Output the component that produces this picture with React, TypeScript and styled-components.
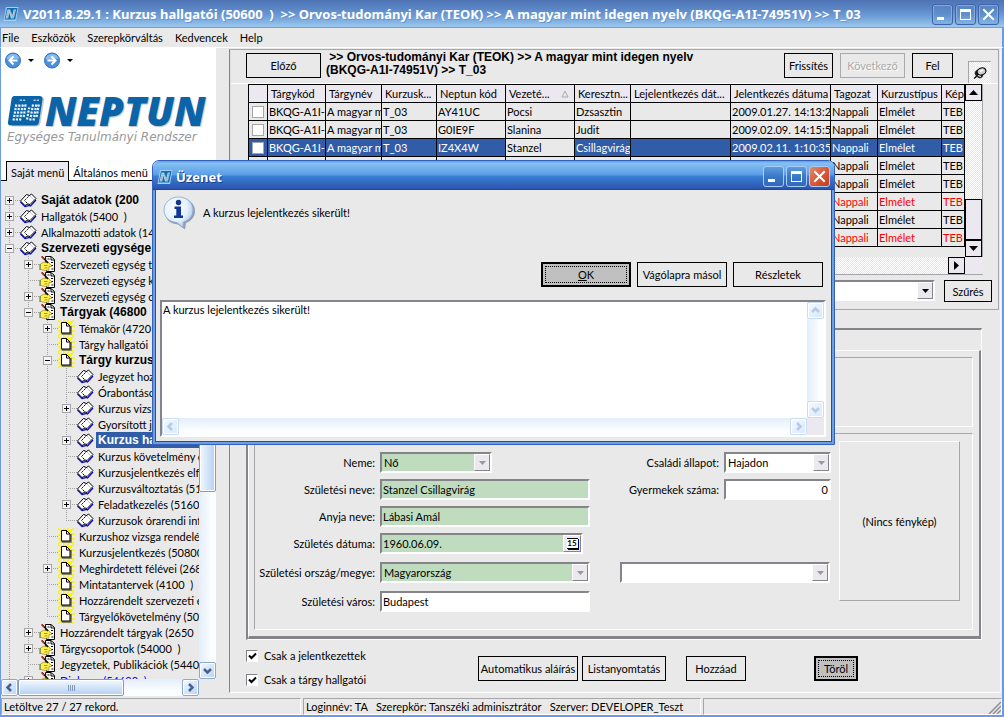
import React from "react";
import styled, { createGlobalStyle, css } from "styled-components";

const FACE = "#e9e9e9";
const SHADE = "#a6a6aa";
const DARK = "#84848a";
const SELECT = "#315da8";

const GlobalStyle = createGlobalStyle`
  *, *::before, *::after { box-sizing: border-box; }
  html, body, #root { height: 100%; }
  body {
    margin: 0;
    background: ${FACE};
    color: #000;
    font-family: Lato, Roboto, "Liberation Sans", Arial, sans-serif;
    font-size: 11px;
    line-height: 13px;
    overflow: hidden;
  }
  button, input, select, textarea { font: inherit; color: inherit; margin: 0; border-radius: 0; }
`;

/* ---------- window frame ---------- */

const Window = styled.div`
  position: relative;
  display: flex;
  flex-direction: column;
  height: 100vh;
  min-height: 700px;
  overflow: hidden;
`;

const TitleBar = styled.header`
  display: flex;
  align-items: center;
  gap: 4px;
  height: 28px;
  padding: 0 5px 0 3px;
  flex: none;
  color: #fff;
  background: linear-gradient(#4e73b3 0, #5a85c4 30%, #6f9fd9 60%, #9cc8ee 96%, #6c9fdf 97%);
`;

const TitleText = styled.h1<{ $shadow?: string }>`
  flex: 1;
  min-width: 0;
  margin: 0;
  overflow: hidden;
  font-family: "Noto Sans", "Open Sans", sans-serif;
  font-size: 13px;
  line-height: 20px;
  font-weight: 700;
  white-space: pre;
  text-shadow: 1px 1px 0 ${(p) => p.$shadow || "#6a94cf"};
`;

const CaptionButtons = styled.div`
  display: flex;
  gap: 2px;
`;

const CaptionButton = styled.button<{ $tone: "idle" | "live" | "close" }>`
  display: flex;
  width: 21px;
  height: 21px;
  padding: 0;
  border: 1px solid ${(p) => (p.$tone === "idle" ? "#3f64ac" : "#a9cdf3")};
  border-radius: 3px;
  background: ${(p) =>
    p.$tone === "close"
      ? "linear-gradient(135deg, #e08a70, #dc5433 55%, #c2401f)"
      : p.$tone === "live"
      ? "linear-gradient(#5e9ce0, #3a78c8 50%, #3468bb)"
      : "linear-gradient(#5b82bd, #5e8fce 50%, #86b4e4)"};
  box-shadow: inset 0 0 0 1px ${(p) => (p.$tone === "idle" ? "#86abd8" : "transparent")};
  svg { margin: auto; }
`;

const MenuBar = styled.nav`
  display: flex;
  gap: 12px;
  height: 20px;
  padding: 2px 0 0 1px;
  flex: none;
  border-left: 1px solid #6a9be4;
  border-right: 2px solid #6a9be4;
  border-bottom: 1px solid #fff;
`;

const MenuItem = styled.a`
  color: #000;
  text-decoration: none;
  line-height: 15px;
`;

const Workspace = styled.div`
  display: flex;
  flex: 1;
  min-height: 0;
  border-left: 1px solid #6a9be4;
  border-right: 2px solid #6a9be4;
`;

const StatusBar = styled.footer`
  display: flex;
  gap: 2px;
  height: 21px;
  padding: 2px 0 0 0;
  flex: none;
  border: solid #6a9be4;
  border-width: 0 2px 2px 1px;
`;

const StatusCell = styled.div<{ $width?: number }>`
  display: flex;
  align-items: center;
  flex: ${(p) => (p.$width ? `0 0 ${p.$width}px` : "1")};
  padding-left: 2px;
  white-space: pre;
  overflow: hidden;
  border: 1px solid #fff;
  border-top-color: ${SHADE};
  border-left-color: ${SHADE};
`;

const SizeGrip = styled.svg`
  margin-left: auto;
  align-self: flex-end;
`;

/* ---------- left pane ---------- */

const SidePane = styled.aside`
  display: flex;
  flex-direction: column;
  flex: 0 0 215px;
  min-width: 0;
`;

const Brand = styled.div`
  height: 113px;
  flex: none;
  padding: 4px 0 0 4px;
  background: #fff;
`;

const NavTools = styled.div`
  display: flex;
  align-items: center;
  height: 16px;
  gap: 6px;
`;

const IconButton = styled.button`
  display: flex;
  padding: 0;
  border: 0;
  background: none;
`;

const NavArrow = styled.span`
  margin-right: 4px;
  border: solid transparent;
  border-width: 3px 3px 0;
  border-top-color: #000;
`;

const LogoRow = styled.div`
  display: flex;
  align-items: center;
  height: 32px;
  margin-top: 27px;
  padding-left: 2px;
`;

const LogoWord = styled.span`
  font-family: "Open Sans", sans-serif;
  font-size: 40px;
  line-height: 32px;
  font-weight: 800;
  font-style: italic;
  color: #0c64a8;
  text-shadow: 1px 1px 1px #b8c4d0;
`;

const LogoLine = styled.div`
  margin-top: 2px;
  padding-left: 2px;
  font-family: "DejaVu Sans", sans-serif;
  font-size: 12px;
  line-height: 16px;
  font-style: italic;
  color: #999;
  white-space: nowrap;
`;

const TabStrip = styled.div`
  display: flex;
  height: 20px;
  flex: none;
  background: linear-gradient(#fff 19px, #000 19px);
  padding-left: 5px;
`;

const SideTab = styled.button<{ $active?: boolean }>`
  padding: 2px 4px 0;
  background: none;
  border: 0;
  white-space: nowrap;
  ${(p) =>
    p.$active &&
    css`
      background: #ebe8ef;
      border: solid #000;
      border-width: 1px 1px 0;
    `}
`;

const TreeArea = styled.div`
  display: flex;
  flex: 1;
  min-height: 0;
`;

const Tree = styled.ul`
  flex: 1;
  min-width: 0;
  margin: 0;
  padding: 11px 0 0;
  list-style: none;
  overflow: hidden;
`;

const TreeRow = styled.li`
  display: flex;
  height: 16px;
`;

const dotsDown = "repeating-linear-gradient(#a0a0a0 0 1px, transparent 1px 2px)";
const dotsAcross = "repeating-linear-gradient(90deg, #a0a0a0 0 1px, transparent 1px 2px)";

const Guide = styled.span<{ $line: "full" | "branch" | "first" | "last" }>`
  display: flex;
  align-items: center;
  flex: 0 0 19px;
  height: 16px;
  padding-left: 4px;
  background-repeat: no-repeat;
  background-image: ${dotsDown}${(p) => (p.$line === "full" ? "" : `, ${dotsAcross}`)};
  background-size: 1px ${(p) => (p.$line === "last" || p.$line === "first" ? "8px" : "16px")}, 11px 1px;
  background-position: 8px ${(p) => (p.$line === "first" ? "8px" : "0")}, 8px 8px;
`;

const Expander = styled.button`
  display: flex;
  width: 9px;
  height: 9px;
  padding: 0;
  border: 1px solid ${SHADE};
  background: #f4f4f4;
`;

const NodeIcon = styled.span`
  display: flex;
  flex: 0 0 19px;
`;

const NodeLabel = styled.a<{ $bold?: boolean; $active?: boolean; $link?: boolean }>`
  flex: 1;
  padding: 1px 0 0 2px;
  overflow: hidden;
  font-weight: ${(p) => (p.$bold ? 700 : 400)};
  font-size: ${(p) => (p.$bold ? 12 : 11)}px;
  ${(p) => p.$bold && css`font-family: "Liberation Sans", Arial, sans-serif;`}
  line-height: 15px;
  text-decoration: none;
  white-space: pre;
  color: ${(p) => (p.$active ? "#fff" : p.$link ? "#00f" : "#000")};
  background: ${(p) => (p.$active ? SELECT : "transparent")};
`;

const ScrollColumn = styled.div`
  display: flex;
  flex-direction: column;
  flex: 0 0 17px;
  background: linear-gradient(90deg, #e3eefc, #fbfdff 70%);
`;

const ScrollRow = styled.div`
  display: flex;
  flex: none;
  height: 17px;
  margin-right: 17px;
  background: linear-gradient(#e3eefc, #fbfdff 70%);
`;

const XpScrollButton = styled.button<{ $faded?: boolean }>`
  display: flex;
  flex: none;
  width: 17px;
  height: 17px;
  padding: 0;
  border: 1px solid ${(p) => (p.$faded ? "#c8dcf6" : "#8ba9cf")};
  border-radius: 2px;
  background: linear-gradient(135deg, #f4f9ff, ${(p) => (p.$faded ? "#d8e8fc" : "#b9d3f3")});
  box-shadow: inset 0 0 0 1px #fff;
  svg { margin: auto; }
`;

const XpThumb = styled.div<{ $size: number; $vertical?: boolean }>`
  display: flex;
  align-items: center;
  justify-content: center;
  gap: 1px;
  flex: 0 0 ${(p) => p.$size}px;
  border: 1px solid #7f9cc4;
  border-radius: 2px;
  box-shadow: inset 0 0 0 1px #fff;
  background: ${(p) =>
    p.$vertical
      ? "linear-gradient(90deg, #f2f8ff, #b4d0f2)"
      : "linear-gradient(#f2f8ff, #b4d0f2)"};
`;

const GripLine = styled.i`
  width: 1px;
  height: 6px;
  background: #8099bd;
`;

const Spring = styled.div`
  flex: 1;
`;

/* ---------- right pane ---------- */

const MainPane = styled.main`
  display: flex;
  flex-direction: column;
  flex: 1;
  min-width: 0;
  margin: 1px 1px 3px 13px;
  border-left: 1px solid ${DARK};
  border-right: 1px solid #f8f8f8;
  border-bottom: 1px solid #fff;
`;

const TopPanel = styled.section`
  flex: none;
  margin-right: 1px;
  border: 1px solid ${SHADE};
  border-left: 1px solid #ddd;
`;

const Header = styled.div`
  display: flex;
  align-items: flex-start;
  height: 34px;
  padding: 3px 7px 0 15px;
  border-bottom: 1px solid #fff;
`;

const Path = styled.p`
  flex: 1;
  margin: -2px 0 0;
  padding-left: 5px;
  font-family: "Liberation Sans", Arial, sans-serif;
  font-size: 12px;
  font-weight: 700;
  line-height: 13px;
  white-space: nowrap;
`;

const FlatButton = styled.button<{ $width: number; $short?: boolean; $focus?: boolean; $gap?: number }>`
  flex: none;
  width: ${(p) => p.$width}px;
  height: ${(p) => (p.$short ? 22 : 25)}px;
  margin-left: ${(p) => p.$gap || 0}px;
  padding: 0;
  border: 1px solid #000;
  background: ${FACE};
  white-space: nowrap;
  &:disabled {
    color: #aaa;
    border-color: #aaa;
    text-shadow: 1px 1px 0 #fff;
  }
  ${(p) =>
    p.$focus &&
    css`
      border-width: 2px;
      background: #c0c0c0;
      outline: 1px dotted #000;
      outline-offset: -5px;
    `}
`;

const PinBox = styled.button`
  display: flex;
  width: 23px;
  height: 22px;
  margin: 8px 0 0 15px;
  padding: 0;
  border: solid ${SHADE};
  border-width: 1px 0 0 1px;
  background: repeating-conic-gradient(#fff 0 25%, #e6e6e6 0 50%) 0 0 / 2px 2px;
  svg { margin: auto; }
`;

const GridFrame = styled.div`
  display: flex;
  height: 173px;
  margin: 0 15px 0 17px;
`;

const TableWrap = styled.div`
  flex: 1;
  min-width: 0;
  overflow: hidden;
`;

const DataTable = styled.table`
  width: 100%;
  table-layout: fixed;
  border-collapse: separate;
  border-spacing: 0;
  border: solid #000;
  border-width: 1px 0 0 1px;
`;

const HeadCell = styled.th`
  height: 18px;
  padding: 0 0 0 3px;
  overflow: hidden;
  border: solid #000;
  border-width: 0 1px 1px 0;
  background: #ebe8ef;
  font-weight: 400;
  text-align: left;
  white-space: nowrap;
`;

const SortMark = styled.svg`
  float: right;
  margin: 3px 5px 0 0;
`;

const Cell = styled.td<{ $tone: "plain" | "active" | "red" }>`
  height: 18px;
  padding: 0 0 0 1px;
  overflow: hidden;
  border: solid #000;
  border-width: 0 1px 1px 0;
  white-space: pre;
  color: ${(p) => (p.$tone === "red" ? "#f00" : p.$tone === "active" ? "#fff" : "#000")};
  background: ${(p) => (p.$tone === "active" ? SELECT : "transparent")};
`;

const RowCheck = styled.input`
  display: block;
  appearance: none;
  width: 12px;
  height: 12px;
  margin: 0 0 0 2px;
  border: 1px solid ${SHADE};
  background: #fff;
`;

const FlatScroll = styled.div`
  display: flex;
  flex-direction: column;
  flex: 0 0 18px;
  border-right: 1px solid ${SHADE};
  background: repeating-conic-gradient(#fff 0 25%, #e6e6e6 0 50%) 0 0 / 2px 2px;
`;

const FlatScrollButton = styled.button`
  display: flex;
  flex: none;
  width: 17px;
  height: 17px;
  padding: 0;
  border: 1px solid #000;
  background: #ebe8ef;
  svg { margin: auto; }
`;

const FlatThumb = styled.div`
  height: 41px;
  border: 1px solid #000;
  background: #ebe8ef;
`;

const FlatScrollRow = styled.div`
  display: flex;
  justify-content: flex-end;
  height: 18px;
  margin: 0 15px 0 17px;
  padding-right: 18px;
  border-bottom: 1px solid ${SHADE};
  background:
    linear-gradient(90deg, transparent calc(100% - 18px), #ebe8ef 0),
    repeating-conic-gradient(#fff 0 25%, #e6e6e6 0 50%) 0 0 / 2px 2px;
`;

const FilterRow = styled.div`
  display: flex;
  justify-content: flex-end;
  gap: 9px;
  height: 34px;
  padding: 5px 6px 0 0;
`;

const sunken = css`
  border: 2px solid #fff;
  border-top-color: ${DARK};
  border-left-color: ${DARK};
`;

const Combo = styled.div<{ $width?: number; $green?: boolean }>`
  display: flex;
  height: 21px;
  width: ${(p) => (p.$width ? `${p.$width}px` : "100%")};
  ${sunken}
  background: ${(p) => (p.$green ? "#bfdcbf" : "#fff")};
`;

const ComboSelect = styled.select`
  appearance: none;
  flex: 1;
  min-width: 0;
  padding: 0 2px;
  border: 0;
  background: transparent;
`;

const ComboArrow = styled.span<{ $muted?: boolean }>`
  display: flex;
  flex: 0 0 16px;
  border: 1px solid #fff;
  border-right-color: ${DARK};
  border-bottom-color: ${DARK};
  background: #ebe8ef;
  color: ${(p) => (p.$muted ? "#999" : "#000")};
  svg { margin: auto; }
`;

const TextField = styled.input<{ $green?: boolean; $right?: boolean }>`
  width: 100%;
  height: 21px;
  padding: 0 1px;
  ${sunken}
  background: ${(p) => (p.$green ? "#bfdcbf" : "#fff")};
  text-align: ${(p) => (p.$right ? "right" : "left")};
`;

const DateField = styled.div`
  display: flex;
  width: 203px;
  height: 21px;
  ${sunken}
  background: #bfdcbf;
`;

const DateInput = styled.input`
  flex: 1;
  min-width: 0;
  padding: 0 1px;
  border: 0;
  background: transparent;
`;

const DateButton = styled.button`
  display: flex;
  align-items: center;
  justify-content: center;
  width: 18px;
  padding: 0;
  border: 1px solid #fff;
  border-right-color: ${DARK};
  border-bottom-color: ${DARK};
  background: #ebe8ef;
`;

const DateGlyph = styled.span`
  width: 11px;
  height: 11px;
  border: solid #000;
  border-width: 1px 0;
  box-shadow: 1px 1px 0 #00007c;
  background: #fff;
  font-size: 8px;
  line-height: 9px;
  font-weight: 700;
`;

const TabPanel = styled.section`
  display: flex;
  flex-direction: column;
  flex: 1;
  min-height: 0;
  margin: 18px 18px 0 16px;
  border: 1px solid #fff;
  border-top: 2px solid ${DARK};
  border-left: 2px solid ${DARK};
`;

const TabPage = styled.div`
  display: flex;
  flex-direction: column;
  flex: 1;
  margin-top: 20px;
  padding: 6px 6px 6px 5px;
  border: 1px solid #fff;
  border-right: 2px solid ${DARK};
  border-bottom: 3px solid ${DARK};
`;

const Group = styled.fieldset<{ $grow?: boolean }>`
  display: flex;
  min-width: 0;
  margin: 0 0 ${(p) => (p.$grow ? 0 : 6)}px;
  padding: ${(p) => (p.$grow ? "7px 12px 0 0" : "0")};
  flex: ${(p) => (p.$grow ? "1" : "0 0 70px")};
  border: 1px solid #fff;
  border-top-color: ${SHADE};
  border-left-color: ${SHADE};
`;

const FormGrid = styled.div<{ $label: number; $field: number; $gap?: number }>`
  display: grid;
  grid-template-columns: ${(p) => p.$label}px ${(p) => p.$field}px;
  grid-template-rows: 27px 27px 27px 29px 29px 20px;
  column-gap: 5px;
  align-items: start;
  align-content: start;
  padding-top: 11px;
  margin-left: ${(p) => p.$gap || 0}px;
`;

const FieldLabel = styled.label<{ $row: number }>`
  grid-row: ${(p) => p.$row};
  grid-column: 1;
  line-height: 22px;
  text-align: right;
  white-space: nowrap;
`;

const FieldSlot = styled.div<{ $row: number; $span?: boolean }>`
  grid-row: ${(p) => p.$row};
  grid-column: ${(p) => (p.$span ? "1 / 3" : "2")};
`;

const Photo = styled.div`
  display: flex;
  align-items: center;
  justify-content: center;
  width: 121px;
  height: 160px;
  margin-left: auto;
  border: 1px solid ${SHADE};
  border-top-color: #fff;
  border-left-color: #fff;
`;

const Actions = styled.div`
  display: flex;
  align-items: flex-start;
  flex: none;
  height: 52px;
  padding: 9px 0 0 16px;
`;

const CheckStack = styled.div`
  display: flex;
  flex-direction: column;
  gap: 11px;
  width: 232px;
`;

const CheckLabel = styled.label`
  display: flex;
  align-items: center;
  gap: 6px;
  height: 13px;
`;

const CheckHolder = styled.span`
  display: grid;
  width: 12px;
  height: 12px;
  > * { grid-area: 1 / 1; }
  svg { margin: 2px; pointer-events: none; }
`;

const CheckInput = styled.input`
  appearance: none;
  width: 12px;
  height: 12px;
  border: 1px solid #fff;
  border-top-color: ${DARK};
  border-left-color: ${DARK};
  background: #fff;
`;

const ActionButtons = styled.div`
  display: flex;
  padding-top: 7px;
`;

/* ---------- message dialog ---------- */

const Dialog = styled.div`
  position: absolute;
  left: 152px;
  top: 160px;
  width: 683px;
  border: 1px solid #3561bc;
  border-radius: 7px 7px 0 0;
  background: ${FACE};
  overflow: hidden;
`;

const DialogTitleBar = styled.div`
  display: flex;
  align-items: center;
  gap: 3px;
  height: 29px;
  padding: 2px 4px 0 4px;
  color: #fff;
  background: linear-gradient(#5d9fe6 0, #85c0f2 8%, #5b9ce8 48%, #3a80d6 52%, #2c54af 96%, #274392 97%);
`;

const DialogBody = styled.div`
  display: flex;
  flex-direction: column;
  height: 254px;
  padding: 6px 6px 5px 5px;
  border: solid #6d9fdf;
  border-width: 0 2px 2px 2px;
  box-shadow: inset 1px -1px 0 #274fa5, inset -1px 0 0 #274fa5;
`;

const Message = styled.div`
  display: flex;
  align-items: flex-start;
  gap: 8px;
  height: 66px;
  padding-left: 3px;
  p { margin: 10px 0 0; }
`;

const DialogButtons = styled.div`
  display: flex;
  justify-content: flex-end;
  gap: 6px;
  padding-right: 3px;
`;

const LogBox = styled.div`
  display: flex;
  flex-direction: column;
  flex: 1;
  min-height: 0;
  margin-top: 13px;
  ${sunken}
  background: #ebe8ef;
`;

const LogTop = styled.div`
  display: flex;
  flex: 1;
  min-height: 0;
`;

const LogText = styled.textarea`
  flex: 1;
  min-width: 0;
  padding: 1px 0 0 1px;
  border: 0;
  resize: none;
  overflow: hidden;
  background: #fff;
`;

/* ---------- glyphs ---------- */

const AppIcon = () => (
  <svg width="16" height="16" viewBox="0 0 16 16" aria-hidden="true">
    <path d="M3 1h12.5L13 15H.5z" fill="#9fd2f2" />
    <path d="M4 2h10.5L12.2 13.6H1.6z" fill="#0d6fb5" />
    <path d="M2.500 12.500 4.500 3.600h2.500L9.400 9l1.300-5.400h2.300L10.800 12.500H8L6.300 6.800 5.200 12.500z" fill="#b9cbd8" />
    <path d="M4 12 5.500 4M7 5l3 7M10 12l2-8" stroke="#5f9cc8" strokeWidth=".8" strokeDasharray="1 1" fill="none" />
  </svg>
);

const MinGlyph = () => (
  <svg width="13" height="13" aria-hidden="true"><path d="M1 9h7v3H1z" fill="#fff" /></svg>
);
const MaxGlyph = () => (
  <svg width="13" height="13" aria-hidden="true"><path d="M1 1h11v11H1zM2 4v7h9V4z" fill="#fff" fillRule="evenodd" /></svg>
);
const CloseGlyph = () => (
  <svg width="13" height="13" aria-hidden="true"><path d="M2 2l9 9M11 2l-9 9" stroke="#fff" strokeWidth="2" strokeLinecap="square" /></svg>
);

const Caption = ({ live }: { live?: boolean }) => (
  <CaptionButtons>
    <CaptionButton $tone={live ? "live" : "idle"} aria-label="Kis méret"><MinGlyph /></CaptionButton>
    <CaptionButton $tone={live ? "live" : "idle"} aria-label="Teljes méret"><MaxGlyph /></CaptionButton>
    <CaptionButton $tone={live ? "close" : "idle"} aria-label="Bezárás"><CloseGlyph /></CaptionButton>
  </CaptionButtons>
);

const RoundArrow = ({ right }: { right?: boolean }) => (
  <svg width="17" height="17" viewBox="0 0 17 17" aria-hidden="true">
    <circle cx="8" cy="8.500" r="7.500" fill="#4a90dc" stroke="#2c6cc0" />
    <path d="M1.500 7a6.700 6.700 0 0 1 13 0C11 5 5 9 1.500 7z" fill="#86bdf0" />
    <path
      d={right ? "M3.500 8.500h7.500M7.500 4.500l4 4-4 4" : "M12.500 8.500H5M8.500 4.500l-4 4 4 4"}
      stroke="#fff" strokeWidth="2" fill="none"
    />
  </svg>
);

const LogoMark = () => (
  <svg width="38" height="32" viewBox="0 0 38 32" aria-hidden="true">
    <path d="M8.500 2H34q3.500 0 3 3.500L33.500 28q-.5 3.500-4 3.500H5z" fill="#c3c9d0" />
    <path d="M7.500 1H32.500q3.500 0 3 3.500L32 27q-.5 3.500-4 3.500H4q-3.500 0-3-3.500L4.500 4q.500-3 3-3z" fill="#0c64a8" />
    <g fill="none" stroke="#e6f2fb" strokeWidth="2.200" strokeDasharray="2.200 1.300">
      <path d="M6.500 25.500 9.500 8.500M9.700 25.500l3-17M13 25.500l3-17" />
      <path d="M16.700 22l2-13.500M20 24.500l2.200-12" />
      <path d="M23.200 25.500l3-17M26.500 25.500l3-17M29.600 22l2.400-13.500" />
    </g>
    <path d="M12.800 5.200h2.200M16 5.200h2.200M26.500 5.200h2.200M29.700 5.200h2.200" stroke="#a8cbe6" strokeWidth="1.600" />
  </svg>
);

const BookIcon = () => (
  <svg width="17" height="16" viewBox="0 0 17 16" aria-hidden="true">
    <path d="M.5 10 5 14.500 9.500 13.500 10.500 14 16 8" stroke="#0000e0" strokeWidth="1.200" fill="none" />
    <path d="M.5 9 6.500 2.500l3 1 2-1.500 4.500 4.500-6 6-2-.5-3 1.500z" fill="#fff" stroke="#000" />
    <path d="M9.500 3.500 4.500 8.500l3.500 3.500" stroke="#000" strokeDasharray="1.500 .8" fill="none" />
    <path d="M10 4l4 4" stroke="#bbb" strokeWidth=".8" />
  </svg>
);

const HandIcon = () => (
  <svg width="17" height="16" viewBox="0 0 17 16" aria-hidden="true">
    <path d="M6.500.5H12L15.500 3.500v12h-8z" fill="#fff" stroke="#000" />
    <path d="M12 1v3h3" fill="none" stroke="#000" />
    <path d="M8.500 3h2M12 6.500h2M12 9.500h2M12.500 13h2" stroke="#000" />
    <path d="M1 8v6" stroke="#00c8c8" strokeWidth="1.500" />
    <path d="M1.500 8 5 6l2 .5 2-1 1 2 2.500 1.500v1.500H10v3.500L6.500 14.500 1.500 13.500z" fill="#fff04a" stroke="#6a5800" strokeWidth=".5" />
    <path d="M5 9.500h3.500M5.500 12h3" stroke="#6a5800" strokeWidth=".6" />
    <path d="M3 .5 9 7" stroke="#000" strokeWidth="1.200" />
    <path d="M2.500.500 5 3.200" stroke="#e02020" strokeWidth="1.500" />
  </svg>
);

const PageIcon = () => (
  <svg width="17" height="16" viewBox="0 0 17 16" aria-hidden="true">
    <path d="M0 0l4 4M16 0l-4 4M0 16l4-4M16 16l-4-4M6 0v3M10 0v3M6 13v3M11 13v3M0 7h4M12 6h5M0 11h4M13 11h4" stroke="#fff200" strokeWidth="1.300" />
    <path d="M2.500 1.500h11v13h-11z" fill="#fff200" />
    <path d="M4.500 4v10h8.500V6" stroke="#666" strokeWidth="1.500" fill="none" />
    <path d="M3.500 2.500h5l3.500 3.500v7H3.500z" fill="#fff" stroke="#000" />
    <path d="M8.500 2.500V6H12" fill="none" stroke="#000" />
  </svg>
);

const icons = { book: BookIcon, hand: HandIcon, page: PageIcon };

const paths = {
  up: "M2 7l3.500-3.500L9 7",
  down: "M2 4l3.500 3.500L9 4",
  left: "M7 2 3.500 5.500 7 9",
  right: "M4 2l3.500 3.500L4 9",
};

const Chevron = ({ to, faded }: { to: keyof typeof paths; faded?: boolean }) => (
  <svg width="11" height="11" aria-hidden="true">
    <path d={paths[to]} fill="none" stroke={faded ? "#b3cbe8" : "#44618f"} strokeWidth="2.500" />
  </svg>
);

const Triangle = ({ d }: { d: string }) => (
  <svg width="9" height="9" aria-hidden="true"><path d={d} fill="currentColor" /></svg>
);

const PinIcon = () => (
  <svg width="14" height="14" viewBox="0 0 14 14" aria-hidden="true">
    <path d="M1 12.500 5 9" stroke="#000" strokeWidth="1.200" />
    <ellipse cx="6" cy="8" rx="4.500" ry="3.500" transform="rotate(40 6 8)" fill="#222" />
    <ellipse cx="8.500" cy="5.500" rx="4.500" ry="3.500" transform="rotate(-20 8.500 5.500)" fill="#d0d0d0" stroke="#000" strokeWidth="1.200" />
    <path d="M5 9.500l3 1" stroke="#eee" strokeWidth="1.200" />
    <path d="M7 5.500l3-1.500" stroke="#fff" strokeWidth="1.500" />
  </svg>
);

const InfoIcon = () => (
  <svg width="32" height="34" viewBox="0 0 32 34" aria-hidden="true">
    <defs>
      <radialGradient id="bubble" cx=".4" cy=".35" r=".7">
        <stop offset="0" stopColor="#fff" />
        <stop offset=".6" stopColor="#e4f0fc" />
        <stop offset="1" stopColor="#9cbfe8" />
      </radialGradient>
    </defs>
    <path d="M17 2c9 0 15 6 15 13 0 6-4 10-9 12l-1 6.500-7-5C7 28 2 23 2 16z" fill="#6d7c94" opacity=".7" />
    <path d="M15.500 1C24 1 30 6.500 30 14c0 6-4 10.500-9.500 12l-.5 6-6-5.500C6 26 1 21 1 14 1 6.500 7.500 1 15.500 1z" fill="url(#bubble)" stroke="#84a8d6" strokeWidth=".8" />
    <circle cx="15.500" cy="6.500" r="2.700" fill="#12379a" />
    <path d="M11.500 10.500h6.500v9h2v2.500h-9v-2.500h2.300V13h-1.800z" fill="#12379a" />
  </svg>
);

/* ---------- data ---------- */

type Node = {
  level: number;
  icon: keyof typeof icons;
  text: string;
  sign?: "+" | "-";
  bold?: boolean;
  active?: boolean;
  link?: boolean;
  last?: boolean;
};

const nodes: Node[] = [
  { level: 0, icon: "book", text: "Saját adatok (200", sign: "+", bold: true },
  { level: 0, icon: "book", text: "Hallgatók (5400  )", sign: "+" },
  { level: 0, icon: "book", text: "Alkalmazotti adatok (14", sign: "+" },
  { level: 0, icon: "book", text: "Szervezeti egysége", sign: "-", bold: true },
  { level: 1, icon: "hand", text: "Szervezeti egység t", sign: "+" },
  { level: 1, icon: "hand", text: "Szervezeti egység k" },
  { level: 1, icon: "hand", text: "Szervezeti egység o", sign: "+" },
  { level: 1, icon: "hand", text: "Tárgyak (46800", sign: "-", bold: true },
  { level: 2, icon: "page", text: "Témakör (4720", sign: "+" },
  { level: 2, icon: "page", text: "Tárgy hallgatói" },
  { level: 2, icon: "page", text: "Tárgy kurzus", sign: "-", bold: true },
  { level: 3, icon: "book", text: "Jegyzet hoz" },
  { level: 3, icon: "book", text: "Órabontáso" },
  { level: 3, icon: "book", text: "Kurzus vizs", sign: "+" },
  { level: 3, icon: "book", text: "Gyorsított je" },
  { level: 3, icon: "book", text: "Kurzus ha", sign: "+", bold: true, active: true },
  { level: 3, icon: "book", text: "Kurzus követelmény e" },
  { level: 3, icon: "book", text: "Kurzusjelentkezés elfo" },
  { level: 3, icon: "book", text: "Kurzusváltoztatás (51" },
  { level: 3, icon: "book", text: "Feladatkezelés (5160", sign: "+" },
  { level: 3, icon: "book", text: "Kurzusok órarendi info", last: true },
  { level: 2, icon: "page", text: "Kurzushoz vizsga rendelé" },
  { level: 2, icon: "page", text: "Kurzusjelentkezés (50800" },
  { level: 2, icon: "page", text: "Meghirdetett félévei (2684", sign: "+" },
  { level: 2, icon: "page", text: "Mintatantervek (4100  )" },
  { level: 2, icon: "page", text: "Hozzárendelt szervezeti e" },
  { level: 2, icon: "page", text: "Tárgyelőkövetelmény (50", last: true },
  { level: 1, icon: "hand", text: "Hozzárendelt tárgyak (2650  )", sign: "+" },
  { level: 1, icon: "hand", text: "Tárgycsoportok (54000  )", sign: "+" },
  { level: 1, icon: "hand", text: "Jegyzetek, Publikációk (5440" },
  { level: 1, icon: "hand", text: "Diploma (54600  )", sign: "+", link: true },
];

const columns: [string, number?][] = [
  ["", 19],
  ["Tárgykód", 58],
  ["Tárgynév", 56],
  ["Kurzusk...", 55],
  ["Neptun kód", 69],
  ["Vezeté...", 69],
  ["Keresztn...", 56],
  ["Lejelentkezés dát...", 100],
  ["Jelentkezés dátuma", 100],
  ["Tagozat", 47],
  ["Kurzustípus", 64],
  ["Kép"],
];

const start = ["BKQG-A1I-7", "A magyar m", "T_03"];
const blank = ["", "", "", "", "", "", "", ""];
const end = ["Nappali", "Elmélet", "TEB"];

const rows: { cells: string[]; tone: "plain" | "active" | "red" }[] = [
  { cells: [...start, "AY41UC", "Pocsi", "Dzsasztin", "", "2009.01.27. 14:13:2", ...end], tone: "plain" },
  { cells: [...start, "G0IE9F", "Slanina", "Judit", "", "2009.02.09. 14:15:5", ...end], tone: "plain" },
  { cells: [...start, "IZ4X4W", "Stanzel", "Csillagvirág", "", "2009.02.11. 1:10:35", ...end], tone: "active" },
  { cells: [...blank, ...end], tone: "plain" },
  { cells: [...blank, ...end], tone: "plain" },
  { cells: [...blank, ...end], tone: "red" },
  { cells: [...blank, ...end], tone: "plain" },
  { cells: [...blank, ...end], tone: "red" },
];

/* ---------- composed parts ---------- */

const TreeNode = ({ node, first }: { node: Node; first: boolean }) => {
  const Icon = icons[node.icon];
  return (
    <TreeRow>
      {Array.from({ length: node.level }, (_, i) => <Guide key={i} $line="full" />)}
      <Guide $line={first ? "first" : node.last ? "last" : "branch"}>
        {node.sign && (
          <Expander aria-label={node.sign === "+" ? "Kinyitás" : "Becsukás"}>
            <svg width="7" height="7" aria-hidden="true">
              <path d={node.sign === "+" ? "M1 3h5v1H1zM3 1h1v5H3z" : "M1 3h5v1H1z"} />
            </svg>
          </Expander>
        )}
      </Guide>
      <NodeIcon><Icon /></NodeIcon>
      <NodeLabel href="#" $bold={node.bold} $active={node.active} $link={node.link}>{node.text}</NodeLabel>
    </TreeRow>
  );
};

const Dropdown = ({ id, value, width, green, muted, label }: {
  id: string; value?: string; width?: number; green?: boolean; muted?: boolean; label?: string;
}) => (
  <Combo $width={width} $green={green}>
    <ComboSelect id={id} aria-label={label}><option>{value || ""}</option></ComboSelect>
    <ComboArrow $muted={muted}><Triangle d="M1 3h7L4.500 7z" /></ComboArrow>
  </Combo>
);

const Check = ({ id, text }: { id: string; text: string }) => (
  <CheckLabel htmlFor={id}>
    <CheckHolder>
      <CheckInput id={id} type="checkbox" defaultChecked />
      <svg width="9" height="8" aria-hidden="true"><path d="M1 3.500 3.500 6 8 1.500" stroke="#000" strokeWidth="2" fill="none" /></svg>
    </CheckHolder>
    {text}
  </CheckLabel>
);

const SideBar = () => (
  <SidePane>
    <Brand>
      <NavTools>
        <IconButton aria-label="Vissza"><RoundArrow /></IconButton>
        <NavArrow />
        <IconButton aria-label="Előre"><RoundArrow right /></IconButton>
        <NavArrow />
      </NavTools>
      <LogoRow><LogoMark /><LogoWord>NEPTUN</LogoWord></LogoRow>
      <LogoLine>Egységes Tanulmányi Rendszer</LogoLine>
    </Brand>
    <TabStrip>
      <SideTab $active>Saját menü</SideTab>
      <SideTab>Általános menü</SideTab>
    </TabStrip>
    <TreeArea>
      <Tree>{nodes.map((n, i) => <TreeNode key={i} node={n} first={i === 0} />)}</Tree>
      <ScrollColumn>
        <XpScrollButton aria-label="Fel"><Chevron to="up" /></XpScrollButton>
        <XpThumb $size={294} $vertical />
        <Spring />
        <XpScrollButton aria-label="Le"><Chevron to="down" /></XpScrollButton>
      </ScrollColumn>
    </TreeArea>
    <ScrollRow>
      <XpScrollButton aria-label="Balra"><Chevron to="left" /></XpScrollButton>
      <XpThumb $size={106}><GripLine /><GripLine /><GripLine /><GripLine /></XpThumb>
      <Spring />
      <XpScrollButton aria-label="Jobbra"><Chevron to="right" /></XpScrollButton>
    </ScrollRow>
  </SidePane>
);

const Students = () => (
  <TopPanel>
    <Header>
      <FlatButton $width={75}>Előző</FlatButton>
      <Path>&nbsp;&gt;&gt; Orvos-tudományi Kar (TEOK) &gt;&gt; A magyar mint idegen nyelv<br />(BKQG-A1I-74951V) &gt;&gt; T_03</Path>
      <FlatButton $width={49}>Frissítés</FlatButton>
      <FlatButton $width={65} $gap={7} disabled>Következő</FlatButton>
      <FlatButton $width={41} $gap={7}>Fel</FlatButton>
      <PinBox aria-label="Rögzítés"><PinIcon /></PinBox>
    </Header>
    <GridFrame>
      <TableWrap>
        <DataTable>
          <colgroup>{columns.map(([, w], i) => <col key={i} width={w} />)}</colgroup>
          <thead>
            <tr>
              {columns.map(([title], i) => (
                <HeadCell key={i}>
                  {title === "Vezeté..." && (
                    <SortMark width="8" height="8"><path d="M4 1 7 7H1z" fill="none" stroke="#aaa" /></SortMark>
                  )}
                  {title}
                </HeadCell>
              ))}
            </tr>
          </thead>
          <tbody>
            {rows.map((row, r) => (
              <tr key={r}>
                <Cell $tone={row.tone}><RowCheck type="checkbox" aria-label={`Sor ${r + 1}`} /></Cell>
                {row.cells.map((text, c) => (
                  <Cell key={c} $tone={row.tone === "active" && c === 4 ? "plain" : row.tone}>{text}</Cell>
                ))}
              </tr>
            ))}
          </tbody>
        </DataTable>
      </TableWrap>
      <FlatScroll>
        <FlatScrollButton aria-label="Fel"><Triangle d="M0 7h9L4.500 2z" /></FlatScrollButton>
        <Spring />
        <FlatThumb />
        <FlatScrollButton aria-label="Le"><Triangle d="M0 2h9L4.500 7z" /></FlatScrollButton>
      </FlatScroll>
    </GridFrame>
    <FlatScrollRow>
      <FlatScrollButton aria-label="Jobbra"><Triangle d="M2 0v9l5-4.500z" /></FlatScrollButton>
    </FlatScrollRow>
    <FilterRow>
      <Dropdown id="filter" width={334} label="Szűrő" />
      <FlatButton $width={48} $short>Szűrés</FlatButton>
    </FilterRow>
  </TopPanel>
);

const PersonForm = () => (
  <TabPanel>
    <TabPage>
      <Group />
      <Group $grow>
        <FormGrid $label={120} $field={210}>
          <FieldLabel $row={1} htmlFor="sex">Neme:</FieldLabel>
          <FieldSlot $row={1}><Dropdown id="sex" value="Nő" width={112} green muted /></FieldSlot>
          <FieldLabel $row={2} htmlFor="born">Születési neve:</FieldLabel>
          <FieldSlot $row={2}><TextField id="born" $green defaultValue="Stanzel Csillagvirág" /></FieldSlot>
          <FieldLabel $row={3} htmlFor="mother">Anyja neve:</FieldLabel>
          <FieldSlot $row={3}><TextField id="mother" $green defaultValue="Lábasi Amál" /></FieldSlot>
          <FieldLabel $row={4} htmlFor="date">Születés dátuma:</FieldLabel>
          <FieldSlot $row={4}>
            <DateField>
              <DateInput id="date" defaultValue="1960.06.09." />
              <DateButton aria-label="Naptár"><DateGlyph>15</DateGlyph></DateButton>
            </DateField>
          </FieldSlot>
          <FieldLabel $row={5} htmlFor="country">Születési ország/megye:</FieldLabel>
          <FieldSlot $row={5}><Dropdown id="country" value="Magyarország" green muted /></FieldSlot>
          <FieldLabel $row={6} htmlFor="city">Születési város:</FieldLabel>
          <FieldSlot $row={6}><TextField id="city" defaultValue="Budapest" /></FieldSlot>
        </FormGrid>
        <FormGrid $label={99} $field={107} $gap={30}>
          <FieldLabel $row={1} htmlFor="status">Családi állapot:</FieldLabel>
          <FieldSlot $row={1}><Dropdown id="status" value="Hajadon" muted /></FieldSlot>
          <FieldLabel $row={2} htmlFor="children">Gyermekek száma:</FieldLabel>
          <FieldSlot $row={2}><TextField id="children" $right defaultValue="0" /></FieldSlot>
          <FieldSlot $row={5} $span><Dropdown id="county" width={210} muted label="Megye" /></FieldSlot>
        </FormGrid>
        <Photo>(Nincs fénykép)</Photo>
      </Group>
    </TabPage>
  </TabPanel>
);

const MessageDialog = () => (
  <Dialog role="dialog" aria-label="Üzenet">
    <DialogTitleBar>
      <AppIcon />
      <TitleText as="h2" $shadow="#1c3c88">Üzenet</TitleText>
      <Caption live />
    </DialogTitleBar>
    <DialogBody>
      <Message><InfoIcon /><p>A kurzus lejelentkezés sikerült!</p></Message>
      <DialogButtons>
        <FlatButton $width={90} $focus><u>O</u>K</FlatButton>
        <FlatButton $width={90}>Vágólapra másol</FlatButton>
        <FlatButton $width={90}>Részletek</FlatButton>
      </DialogButtons>
      <LogBox>
        <LogTop>
          <LogText aria-label="Részletek" defaultValue="A kurzus lejelentkezés sikerült!" />
          <ScrollColumn>
            <XpScrollButton $faded aria-label="Fel"><Chevron to="up" faded /></XpScrollButton>
            <Spring />
            <XpScrollButton $faded aria-label="Le"><Chevron to="down" faded /></XpScrollButton>
          </ScrollColumn>
        </LogTop>
        <ScrollRow>
          <XpScrollButton $faded aria-label="Balra"><Chevron to="left" faded /></XpScrollButton>
          <Spring />
          <XpScrollButton $faded aria-label="Jobbra"><Chevron to="right" faded /></XpScrollButton>
        </ScrollRow>
      </LogBox>
    </DialogBody>
  </Dialog>
);

export default function App() {
  return (
    <>
      <GlobalStyle />
      <Window>
        <TitleBar>
          <AppIcon />
          <TitleText>{"V2011.8.29.1 : Kurzus hallgatói (50600  )  >> Orvos-tudományi Kar (TEOK) >> A magyar mint idegen nyelv (BKQG-A1I-74951V) >> T_03"}</TitleText>
          <Caption />
        </TitleBar>
        <MenuBar>
          {["File", "Eszközök", "Szerepkörváltás", "Kedvencek", "Help"].map((m) => <MenuItem key={m} href="#">{m}</MenuItem>)}
        </MenuBar>
        <Workspace>
          <SideBar />
          <MainPane>
            <Students />
            <PersonForm />
            <Actions>
              <CheckStack>
                <Check id="only-signed" text="Csak a jelentkezettek" />
                <Check id="only-subject" text="Csak a tárgy hallgatói" />
              </CheckStack>
              <ActionButtons>
                <FlatButton $width={100}>Automatikus aláírás</FlatButton>
                <FlatButton $width={84} $gap={4}>Listanyomtatás</FlatButton>
                <FlatButton $width={60} $gap={20}>Hozzáad</FlatButton>
                <FlatButton $width={44} $gap={68} $focus>Töröl</FlatButton>
              </ActionButtons>
            </Actions>
          </MainPane>
        </Workspace>
        <StatusBar>
          <StatusCell $width={300}>Letöltve 27 / 27 rekord.</StatusCell>
          <StatusCell $width={398}>{"Loginnév: TA   Szerepkör: Tanszéki adminisztrátor   Szerver: DEVELOPER_Teszt"}</StatusCell>
          <StatusCell>
            <SizeGrip width="13" height="13"><path d="M1 13 13 1M5 13l8-8M9 13l4-4" stroke="#8e8e94" strokeWidth="1.500" /></SizeGrip>
          </StatusCell>
        </StatusBar>
        <MessageDialog />
      </Window>
    </>
  );
}
